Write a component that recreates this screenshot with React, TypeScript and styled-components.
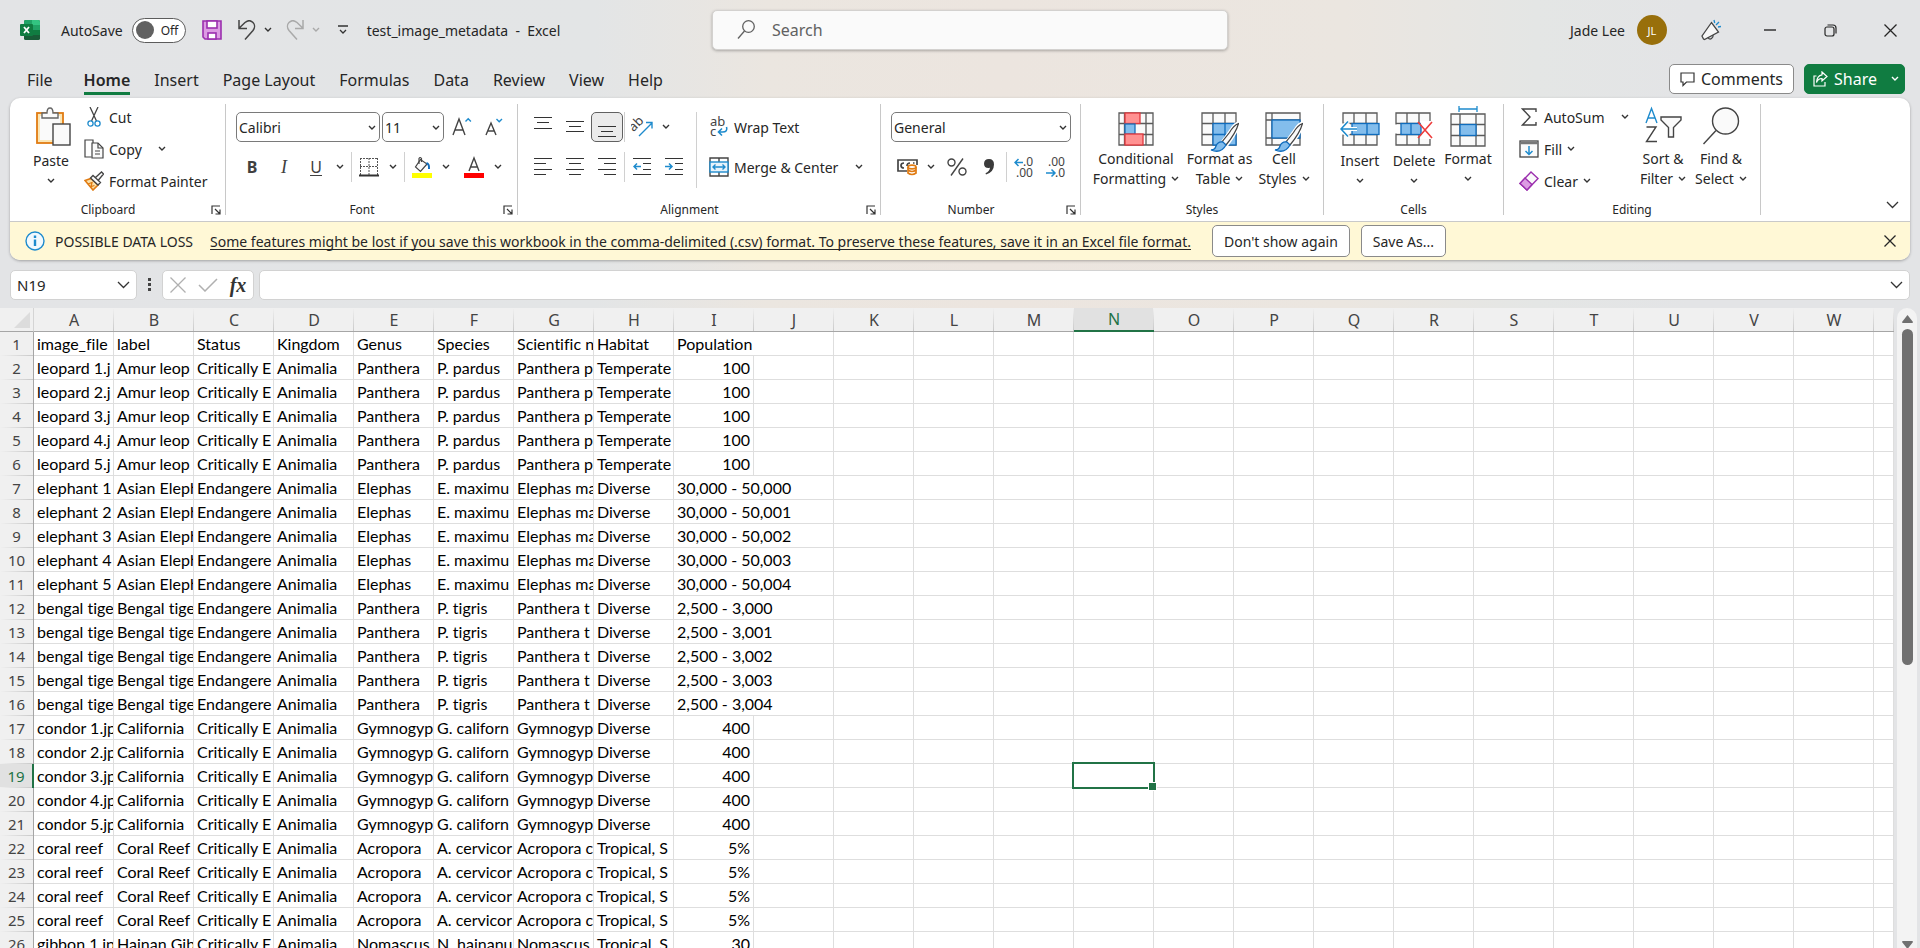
import React from 'react';
import styled, { createGlobalStyle, css } from 'styled-components';

const UI_FONT = '"Noto Sans", "Open Sans", sans-serif';
const CELL_FONT = 'Lato, "Open Sans", sans-serif';
const INK = '#262626';
const LINE = '#444444';
const BLUE = '#1e8bcd';
const GREEN = '#217346';

const GlobalStyle = createGlobalStyle`
  * { box-sizing: border-box; }
  body { margin: 0; font-family: ${UI_FONT}; color: ${INK}; overflow: hidden; }
  button, input, select { font: inherit; color: inherit; }
  svg { display: block; flex: none; }
`;

const Window = styled.div`
  display: flex;
  flex-direction: column;
  height: 100vh;
  background: linear-gradient(90deg, #e3e4e6 0%, #e3e5e6 31%, #ebe6e0 40%, #ece5df 52%, #ebe6e0 70%, #e4e6e5 80%, #e3e4e6 88%);
`;

/* ---------- title bar ---------- */

const TitleBar = styled.header`
  display: grid;
  grid-template-columns: 1fr minmax(0, 516px) 1fr;
  align-items: center;
  height: 60px;
  padding-left: 20px;
  font-size: 14px;
`;

const QuickAccess = styled.div`
  display: flex;
  align-items: center;
  white-space: nowrap;
`;

const PlainButton = styled.button<{ $w?: number; $h?: number; $gap?: number }>`
  display: flex;
  flex: none;
  align-items: center;
  justify-content: center;
  width: ${p => (p.$w ? `${p.$w}px` : 'auto')};
  height: ${p => p.$h ?? 30}px;
  margin-left: ${p => p.$gap ?? 0}px;
  padding: 0;
  border: 0;
  background: transparent;
`;

const SwitchName = styled.label`
  margin: 0 9px 0 21px;
`;

const Switch = styled.span`
  display: flex;
  align-items: center;
  gap: 7px;
  width: 54px;
  height: 25px;
  padding-left: 3px;
  border: 1px solid #5c5c5c;
  border-radius: 13px;
  background: #fff;
  font-size: 12px;
`;

const SwitchKnob = styled.input`
  appearance: none;
  width: 18px;
  height: 18px;
  margin: 0;
  border-radius: 50%;
  background: #616161;
`;

const DocTitle = styled.h1`
  margin: 0 0 0 19px;
  font-size: 14px;
  font-weight: 400;
  white-space: pre;
`;

const SearchBox = styled.label`
  display: flex;
  align-items: center;
  gap: 15px;
  height: 40px;
  padding-left: 24px;
  border: 1px solid #d3d1cf;
  border-radius: 5px;
  background: #fafafa;
  box-shadow: 0 1px 3px rgba(0, 0, 0, 0.28);
`;

const SearchInput = styled.input`
  flex: 1;
  min-width: 0;
  border: 0;
  outline: 0;
  background: transparent;
  font-size: 16px;
  &::placeholder { color: #616161; opacity: 1; }
`;

const WindowTools = styled.div`
  display: flex;
  align-items: center;
  justify-content: flex-end;
`;

const Avatar = styled.span`
  display: flex;
  align-items: center;
  justify-content: center;
  width: 30px;
  height: 30px;
  margin: 0 15px 0 12px;
  border-radius: 50%;
  background: #986f0b;
  color: #fff;
  font-size: 11px;
`;

/* ---------- tabs ---------- */

const TabRow = styled.div`
  display: flex;
  align-items: center;
  height: 38px;
  padding: 0 15px 0 27px;
`;

const Tabs = styled.nav`
  display: flex;
  flex: 1;
  align-self: flex-end;
  gap: 24px;
  padding-bottom: 3px;
`;

const Tab = styled.button<{ $active?: boolean; $first?: boolean }>`
  padding: 0;
  margin-right: ${p => (p.$first ? 7 : 0)}px;
  border: 0;
  border-bottom: 3px solid ${p => (p.$active ? '#107c41' : 'transparent')};
  background: transparent;
  font-size: 16px;
  line-height: 24px;
  font-weight: ${p => (p.$active ? 600 : 400)};
`;

const CommentsButton = styled.button`
  display: flex;
  align-items: center;
  gap: 6px;
  height: 30px;
  padding: 0 10px;
  border: 1px solid #8a8a8a;
  border-radius: 5px;
  background: #fff;
  font-size: 16px;
`;

const ShareButton = styled(CommentsButton)`
  margin-left: 10px;
  padding: 0 5px 0 8px;
  border-color: #107c41;
  background: #107c41;
  color: #fff;
`;

/* ---------- ribbon ---------- */

const Panel = styled.section`
  margin: 0 10px;
  border-radius: 10px;
  background: #fff;
  box-shadow: 0 1px 3px rgba(0, 0, 0, 0.3);
  overflow: hidden;
`;

const Ribbon = styled.div`
  display: flex;
  height: 123px;
  font-size: 14px;
`;

const GroupFrame = styled.div<{ $w: number }>`
  display: flex;
  flex: none;
  flex-direction: column;
  width: ${p => p.$w}px;
`;

const GroupBody = styled.div<{ $left: number; $top: number }>`
  display: flex;
  flex: 1;
  align-items: flex-start;
  padding: ${p => p.$top}px 0 0 ${p => p.$left}px;
`;

const GroupFooter = styled.div<{ $launcher?: boolean }>`
  display: grid;
  grid-template-columns: ${p => (p.$launcher ? '1fr 19px' : '1fr')};
  align-items: center;
  height: 23px;
  font-size: 12px;
  text-align: center;
`;

const Divider = styled.span`
  flex: none;
  width: 1px;
  margin: 6px 0;
  background: #c8c8c8;
`;

const MiniDivider = styled.span<{ $l?: number; $h?: number }>`
  flex: none;
  width: 1px;
  height: ${p => p.$h ?? 30}px;
  margin: 0 1px 0 ${p => p.$l ?? 1}px;
  background: #d0d0d0;
`;

const Rows = styled.div<{ $gap?: number; $w?: number }>`
  display: flex;
  flex: none;
  flex-direction: column;
  gap: ${p => p.$gap ?? 0}px;
  width: ${p => (p.$w ? `${p.$w}px` : 'auto')};
`;

const Row = styled.div`
  display: flex;
  align-items: center;
`;

const LabelButton = styled.button<{ $h?: number }>`
  display: flex;
  align-items: center;
  gap: 5px;
  height: ${p => p.$h ?? 32}px;
  padding: 0 2px;
  border: 0;
  background: transparent;
  white-space: nowrap;
`;

const IconSlot = styled.span`
  display: flex;
  justify-content: center;
  width: 20px;
`;

const LabelGap = styled.span<{ $w: number }>`
  width: ${p => p.$w}px;
`;

const BigButton = styled.button<{ $w: number }>`
  display: flex;
  flex: none;
  flex-direction: column;
  align-items: center;
  width: ${p => p.$w}px;
  padding: 0;
  border: 0;
  background: transparent;
  line-height: 20px;
  white-space: nowrap;
`;

const BigIcon = styled.span<{ $tall?: boolean }>`
  display: flex;
  align-items: flex-start;
  justify-content: center;
  height: ${p => (p.$tall ? 45 : 43)}px;
`;

const BigLine = styled.span`
  display: flex;
  align-items: center;
  gap: 5px;
  height: 20px;
`;

const ToolButton = styled.button<{ $w?: number; $pressed?: boolean }>`
  display: flex;
  flex: none;
  align-items: center;
  justify-content: center;
  width: ${p => p.$w ?? 32}px;
  height: 30px;
  padding: 0;
  border: 1px solid transparent;
  border-radius: 5px;
  background: transparent;
  ${p => p.$pressed && css`
    border-color: #616161;
    background: #ebebeb;
  `}
`;

const LetterStyle = styled.span<{ $kind: 'bold' | 'italic' | 'underline' }>`
  color: #404040;
  font-size: 16px;
  line-height: 18px;
  ${p => p.$kind === 'bold' && 'font-weight: 700;'}
  ${p => p.$kind === 'italic' && 'font-family: "Liberation Serif", serif; font-style: italic; font-size: 18px;'}
  ${p => p.$kind === 'underline' && 'border-bottom: 1px solid #404040; line-height: 16px;'}
`;

const SelectFrame = styled.span<{ $w: number }>`
  position: relative;
  display: block;
  flex: none;
  width: ${p => p.$w}px;
  margin-right: 2px;
`;

const SelectField = styled.select`
  appearance: none;
  width: 100%;
  height: 30px;
  padding: 0 20px 0 2px;
  border: 1px solid #7a7a7a;
  border-radius: 5px;
  background: #fff;
  font-size: 14px;
`;

const SelectArrow = styled.span`
  position: absolute;
  right: 4px;
  top: 13px;
  pointer-events: none;
`;

const Collapse = styled.div`
  display: flex;
  flex: 1;
  align-items: flex-end;
  justify-content: flex-end;
  padding: 0 6px 4px 0;
`;

/* ---------- warning bar ---------- */

const Notice = styled.div`
  display: flex;
  align-items: center;
  height: 39px;
  padding: 0 8px 0 15px;
  border-top: 1px solid #c9c9c9;
  background: #fff8d6;
  font-size: 14px;
  white-space: nowrap;
`;

const NoticeTitle = styled.strong`
  margin: 0 17px 0 10px;
  font-weight: 400;
`;

const NoticeLink = styled.a`
  margin-right: 21px;
  color: inherit;
  text-decoration: underline;
  text-decoration-skip-ink: none;
  text-underline-offset: 2px;
`;

const NoticeButton = styled.button`
  height: 32px;
  margin-right: 11px;
  padding: 0 11px;
  border: 1px solid #8a8a8a;
  border-radius: 5px;
  background: #fff;
`;

const Spacer = styled.span`
  flex: 1;
`;

/* ---------- formula bar ---------- */

const FormulaBar = styled.div`
  display: flex;
  align-items: center;
  height: 48px;
  padding: 2px 10px 0;
`;

const Field = styled.label<{ $w?: number }>`
  display: flex;
  align-items: center;
  flex: ${p => (p.$w ? `0 0 ${p.$w}px` : '1')};
  min-width: 0;
  height: 30px;
  padding: 0 6px;
  border: 1px solid #d2d2d2;
  border-radius: 5px;
  background: #fff;
`;

const FieldInput = styled.input`
  flex: 1;
  width: 100%;
  min-width: 0;
  padding: 0;
  border: 0;
  outline: 0;
  background: transparent;
  font-size: 15px;
`;

const FxBox = styled.div`
  display: flex;
  flex: none;
  width: 92px;
  height: 30px;
  margin-right: 5px;
  border: 1px solid #d2d2d2;
  border-radius: 5px;
  background: #fff;
`;

const Fx = styled.span`
  color: #333;
  font: italic 700 20px "Liberation Serif", serif;
`;

/* ---------- sheet ---------- */

const SheetArea = styled.main`
  display: flex;
  flex: 1;
  min-height: 0;
  padding-right: 3px;
`;

const SheetView = styled.div`
  flex: 1;
  min-width: 0;
  overflow: hidden;
  background: #fff;
`;

const Table = styled.table`
  width: 100%;
  table-layout: fixed;
  border-collapse: separate;
  border-spacing: 0;
  font-family: ${CELL_FONT};
  font-size: 16px;
  font-variant-ligatures: none;
  line-height: 22px;
  color: #000;
`;

const Col = styled.col<{ $w?: number }>`
  width: ${p => (p.$w ? `${p.$w}px` : 'auto')};
`;

const ColHead = styled.th<{ $active?: boolean }>`
  height: 24px;
  padding: 0;
  border-bottom: ${p => (p.$active ? `2px solid ${GREEN}` : '1px solid #a6a6a6')};
  background:
    linear-gradient(180deg, #f0f0f0, #c9c9c9) right / 1px 100% no-repeat,
    ${p => (p.$active ? '#e1e1e1' : '#f0f0f0')};
  color: ${p => (p.$active ? GREEN : '#444')};
  font: 400 16px / 20px ${UI_FONT};
`;

const RowHead = styled.th<{ $active?: boolean }>`
  height: 24px;
  padding: 0;
  border-right: ${p => (p.$active ? `2px solid ${GREEN}` : '1px solid #a6a6a6')};
  background:
    linear-gradient(90deg, #f0f0f0, #c9c9c9) bottom / 100% 1px no-repeat,
    ${p => (p.$active ? '#e1e1e1' : '#f0f0f0')};
  color: ${p => (p.$active ? GREEN : '#444')};
  font: 400 15px / 22px ${UI_FONT};
  text-align: center;
`;

const Corner = styled.th`
  height: 24px;
  padding: 4px 3px 3px 14px;
  border-right: 1px solid #d4d4d4;
  border-bottom: 1px solid #a6a6a6;
  background: #f0f0f0;
`;

const Cell = styled.td<{ $num?: boolean; $active?: boolean }>`
  position: ${p => (p.$active ? 'relative' : 'static')};
  height: 24px;
  padding: 0 3px;
  border-right: 1px solid #dedede;
  border-bottom: 1px solid #dedede;
  overflow: ${p => (p.$active ? 'visible' : 'hidden')};
  text-align: ${p => (p.$num ? 'right' : 'left')};
  white-space: pre;
`;

const Selection = styled.span`
  position: absolute;
  inset: -2px;
  border: 2px solid ${GREEN};
  &::after {
    content: '';
    position: absolute;
    right: -4px;
    bottom: -4px;
    width: 7px;
    height: 7px;
    border: 1px solid #fff;
    background: ${GREEN};
  }
`;

const ScrollTrack = styled.div`
  display: flex;
  flex: none;
  flex-direction: column;
  align-items: center;
  width: 20px;
  margin-left: 3px;
  padding-top: 7px;
  border-radius: 10px 10px 0 0;
  background: #f3f3f3;
`;

const ScrollThumb = styled.div`
  flex: 336;
  width: 11px;
  margin-top: 6px;
  border-radius: 6px;
  background: #707070;
`;

const ScrollRest = styled.div`
  flex: 276;
`;

/* ---------- icons ---------- */

type SvgProps = { w: number; h: number; children: React.ReactNode; stroke?: string; sw?: number; fill?: string };
const Svg = ({ w, h, children, stroke = LINE, sw = 1, fill = 'none' }: SvgProps) => (
  <svg width={w} height={h} viewBox={`0 0 ${w} ${h}`} fill={fill} stroke={stroke} strokeWidth={sw} aria-hidden="true">
    {children}
  </svg>
);

const Chevron = ({ color = '#333', big = false }: { color?: string; big?: boolean }) =>
  big ? (
    <Svg w={13} h={8} stroke={color} sw={1.3}><path d="M1 1l5.5 5.5L12 1" /></Svg>
  ) : (
    <Svg w={8} h={6} stroke={color} sw={1.4}><path d="M1 1l3 3 3-3" /></Svg>
  );

const ExcelLogo = () => (
  <Svg w={20} h={20} stroke="none">
    <rect x="4" y="0" width="16" height="20" rx="1.5" fill="#185c37" />
    <path d="M4 1.5Q4 0 5.500 0H12v5H4z" fill="#21a366" />
    <path d="M12 0h6.500Q20 0 20 1.500V5h-8z" fill="#33c481" />
    <rect x="4" y="5" width="8" height="5" fill="#107c41" />
    <rect x="12" y="5" width="8" height="5" fill="#21a366" />
    <rect x="12" y="10" width="8" height="5" fill="#107c41" />
    <rect x="0" y="4" width="13" height="12" rx="1" fill="#107c41" />
    <path d="M4 7l5 6M9 7l-5 6" stroke="#fff" strokeWidth="1.800" />
  </Svg>
);

const SaveIcon = () => (
  <Svg w={20} h={20} stroke="#9b2fae" sw={1.6} fill="#dc9be3">
    <path d="M1 1h18v18H3l-2-2z" />
    <rect x="5" y="1" width="10" height="7" fill="#fff" />
    <rect x="6" y="13" width="8" height="6" fill="#fff" />
  </Svg>
);

const UndoIcon = ({ flip = false, color = LINE }: { flip?: boolean; color?: string }) => (
  <Svg w={18} h={20} stroke={color} sw={1.5}>
    <g transform={flip ? 'translate(18 0) scale(-1 1)' : undefined}>
      <path d="M1 0v8.500h8M1.300 8L7 2.500c3-2.500 6-2 8 0s2 5.500 0 8L7 19.500" />
    </g>
  </Svg>
);

const CustomizeIcon = () => (
  <Svg w={10} h={10} stroke="#333" sw={1.3}><path d="M0 1h10M2 5l3 3 3-3" /></Svg>
);

const SearchIcon = () => (
  <Svg w={18} h={20} stroke="#616161" sw={1.3}><circle cx="11.500" cy="6.500" r="5.800" /><path d="M7.500 11L1 18.500" /></Svg>
);

const PenIcon = () => (
  <Svg w={20} h={22} sw={1.3}>
    <path d="M10.500 3.500L1 17l1.500 3 1 .5L17.500 13z" fill="#f7f7f7" />
    <path d="M7 18.500q1.500 2.500 3.500 1t1.500-3.500" />
    <path d="M13 1l.7 3M18 3l-3 3M20 7.500l-3 .5" stroke={BLUE} />
  </Svg>
);

const CommentIcon = () => (
  <Svg w={15} h={15} stroke="#333" sw={1.2}><path d="M1 1h13v9H6.500L3 13.500V10H1z" /></Svg>
);
const ShareIcon = () => (
  <Svg w={15} h={16} stroke="#fff" sw={1.2}>
    <path d="M3.500 5H1v10h11v-4M9 1l5 4.500L9 10V7.500q-4 0-5.500 4Q4 4.500 9 3.800z" />
  </Svg>
);

const PasteIcon = () => (
  <Svg w={42} h={41} sw={1.4}>
    <rect x="7" y="7" width="26" height="30" fill="#fbe6b5" stroke="#e07b12" strokeWidth="1.800" />
    <rect x="10" y="10" width="20" height="24" fill="#fafafa" stroke="none" />
    <path d="M12 12V7h5q0-5 3-5t3 5h5v5z" fill="#fafafa" stroke="#666" />
    <rect x="23" y="18" width="17" height="21" fill="#fafafa" />
  </Svg>
);
const CutIcon = () => (
  <Svg w={14} h={20} sw={1.3}>
    <path d="M3 0l6.500 14M11 0L4.500 14" />
    <circle cx="3.500" cy="16.500" r="2.600" stroke={BLUE} /><circle cx="10.500" cy="16.500" r="2.600" stroke={BLUE} />
  </Svg>
);
const CopyIcon = () => (
  <Svg w={20} h={20} sw={1.2}>
    <path d="M7.500 18H1V1h8v3" /><path d="M8 4h6l5 5v10H8z" fill="#fafafa" /><path d="M14 4v5h5M11 12h5M11 15h5" />
  </Svg>
);
const PainterIcon = () => (
  <Svg w={20} h={20} sw={1.3}>
    <path d="M1 9.500l6-2 7 6.500-5 5z" fill="#fbe0a8" stroke="#e07b12" strokeWidth="1.600" />
    <path d="M4 13l4-1.500-1 4 3.500-1" stroke="#e07b12" />
    <path d="M6.500 7l2.500-2.500 7.500 7L14 14zM11.500 6.500l6-5.500 2 2-5 6" fill="#fafafa" />
  </Svg>
);

const LauncherIcon = () => (
  <Svg w={10} h={10} stroke="#333" sw={1.2}><path d="M1 9V1h8M4 4l5 5M9 4.500V9H4.500" /></Svg>
);

const SizeIcon = ({ up }: { up: boolean }) => (
  <Svg w={20} h={20} sw={1.4}>
    <path d={up ? 'M1 18L7 2l6 16M3 13h8' : 'M2 18L7 6l5 12M4 14h6'} />
    <path d={up ? 'M13.500 4.500l2.700-2.700 2.700 2.700' : 'M12.500 2l2.700 2.700L18 2'} stroke={BLUE} />
  </Svg>
);

const BordersIcon = () => (
  <Svg w={20} h={20} stroke="#555">
    <path d="M1 1.500h18M1.500 1v17M10 1v17M18.500 1v17M1 9.500h18" strokeDasharray="2 1" />
    <path d="M0 18.500h20" strokeWidth="1.800" stroke="#333" />
  </Svg>
);
const FillColorIcon = () => (
  <Svg w={20} h={22} sw={1.2}>
    <path d="M8.500 3.500L3.500 11l5 4.500L15 8z" fill="#fafafa" /><path d="M7 8V2.500Q8 .5 9.500 2.500V6" />
    <path d="M14.500 7q3 1 2.500 6" stroke="#0f6cbd" strokeWidth="2" />
    <rect x="0" y="17" width="20" height="5" fill="#ffff00" stroke="none" />
  </Svg>
);
const FontColorIcon = () => (
  <Svg w={20} h={22} sw={1.4}>
    <path d="M5 15L10 2l5 13M6.500 11h7" /><rect x="0" y="17" width="20" height="5" fill="#ff0000" stroke="none" />
  </Svg>
);

const LinesIcon = ({ rows }: { rows: [number, number, number][] }) => (
  <Svg w={18} h={20} stroke="#333" sw={1.2}>
    {rows.map(([y, a, b]) => <path key={y} d={`M${a} ${y + 0.5}H${b}`} />)}
  </Svg>
);
const IndentIcon = ({ out }: { out: boolean }) => (
  <Svg w={18} h={20} stroke="#333" sw={1.2}>
    <path d="M0 1.500h18M10 6.500h8M10 12.500h8M0 17.500h18" />
    <path d={out ? 'M8 9.500H1M4 6.500l-3 3 3 3' : 'M0 9.500h7M4 6.500l3 3-3 3'} stroke={BLUE} strokeWidth="1.500" />
  </Svg>
);
const OrientIcon = () => (
  <Svg w={22} h={22} sw={1.4}>
    <text x="0" y="14" transform="rotate(-45 4 12)" fontSize="13" fontFamily={UI_FONT} fill={LINE} stroke="none">ab</text>
    <path d="M8 20L21 7M15 6.500h6v6" stroke={BLUE} />
  </Svg>
);
const WrapIcon = () => (
  <Svg w={20} h={22} sw={1.4}>
    <text x="1" y="10" fontSize="13" fontFamily={UI_FONT} fill={LINE} stroke="none">ab</text>
    <text x="1" y="20" fontSize="13" fontFamily={UI_FONT} fill={LINE} stroke="none">c</text>
    <path d="M17.500 11q1.500 5-4 5H10M13 12.500L9.500 16l3.500 3.500" stroke={BLUE} strokeWidth="1.600" />
  </Svg>
);
const MergeIcon = () => (
  <Svg w={20} h={20} sw={1.4}>
    <path d="M1 1h18v18H1zM10 1v4M10 15v4" />
    <rect x="1" y="5" width="18" height="10" fill="#e8f3fb" stroke={BLUE} />
    <path d="M4 10h12M6.500 7.500L4 10l2.500 2.500M13.500 7.500L16 10l-2.500 2.500" stroke={BLUE} />
  </Svg>
);

const CurrencyIcon = () => (
  <Svg w={21} h={18} sw={1.7}>
    <path d="M10 13H1V2h19v5M7 5Q4 5 4 7.500T7 10M13 5q-3 0-3 3M16 5h1.500" />
    <path d="M11 9v6q4 3 8 0V9" fill="#fff" stroke="#e07b12" />
    <ellipse cx="15" cy="9" rx="4" ry="1.800" fill="#fff" stroke="#e07b12" /><path d="M11 12q4 3 8 0" stroke="#e07b12" />
  </Svg>
);
const PercentIcon = () => (
  <Svg w={20} h={20} sw={1.4}><circle cx="4.500" cy="5.500" r="3.500" /><circle cx="15.500" cy="14.500" r="3.500" /><path d="M16 1.500L4 18.500" /></Svg>
);
const CommaIcon = () => (
  <Svg w={10} h={16} stroke="none" fill="#3b3b3b"><path d="M5 0q5 0 5 5.500Q10 13 2 15.500l-.5-1.200Q5.500 12.500 6 8.800 0 9.500 0 4.700 0 0 5 0z" /></Svg>
);
const DecimalIcon = ({ more }: { more: boolean }) => (
  <Svg w={20} h={22} sw={1.5}>
    <text x={more ? 9 : 2} y="10" fontSize="12" fontFamily={UI_FONT} fill={LINE} stroke="none">{more ? '.0' : '.00'}</text>
    <text x={more ? 2 : 9} y="21" fontSize="12" fontFamily={UI_FONT} fill={LINE} stroke="none">{more ? '.00' : '.0'}</text>
    <path d={more ? 'M9 6.500H1M4.500 3L1 6.500 4.500 10' : 'M0 17h8.500M5.500 13.500L9 17l-3.500 3.500'} stroke={BLUE} />
  </Svg>
);

const gridPath = 'M1 1h34v32H1zM1 11.500h34M1 22.500h34M12 1v32M24 1v32';
const CondIcon = () => (
  <Svg w={36} h={34} sw={1.3} stroke="#5a5a5a">
    <path d="M1 1h34v32H1zM1 11.500h34M1 22.500h34M6.500 1v32M28 1v32" fill="#fafafa" />
    <rect x="7" y="1" width="15" height="10.500" fill="#ff9191" stroke="#e0383e" />
    <rect x="7" y="12" width="10" height="10" fill="#83bdec" stroke="#1b6fb8" />
    <rect x="7" y="22" width="18" height="11" fill="#ff9191" stroke="#e0383e" />
  </Svg>
);
const Brush = () => (
  <g>
    <path d="M38 11q-4 0-8 7l-8 11 4 4Q36 20 38 11z" fill="#fff" stroke="#fff" strokeWidth="3" />
    <path d="M37.500 11.500q-5 2-9 9L21 30l4 3Q35 21 37.500 11.500z" fill="#fafafa" stroke={LINE} strokeWidth="1.200" />
    <path d="M22 30q-5-1-7 4-1 4-5 4 10 4 15-5z" fill="#83bdec" stroke="#0f6cbd" />
  </g>
);
const FormatTableIcon = () => (
  <Svg w={38} h={42} sw={1.3} stroke="#5a5a5a">
    <path d={gridPath} fill="#fafafa" /><rect x="12" y="11.500" width="23" height="21.500" fill="#83bdec" stroke="#0f6cbd" />
    <path d="M12 22.500h23M24 11.500V33" stroke="#0f6cbd" /><Brush />
  </Svg>
);
const CellStylesIcon = () => (
  <Svg w={38} h={42} sw={1.3} stroke="#5a5a5a">
    <path d="M1 1h34v32H1zM1 8h34M1 26h34M7 1v32" fill="#fafafa" /><rect x="7" y="8" width="28" height="18" fill="#83bdec" stroke="#0f6cbd" />
    <Brush />
  </Svg>
);
const InsertIcon = () => (
  <Svg w={40} h={34} sw={1.3} stroke="#5a5a5a">
    <path d="M3 1h34v32H3zM3 11.500h34M3 22.500h34M14 1v32M26 1v32" fill="#fafafa" />
    <path d="M0 11.500h10v11H0z" fill="#fff" stroke="none" />
    <rect x="12" y="11.500" width="27" height="11" fill="#83bdec" stroke="#0f6cbd" /><path d="M27 11.500v11" stroke="#0f6cbd" />
    <path d="M17 17H1M8 9.500L1 17l7 7.500" stroke="#fff" strokeWidth="4" /><path d="M17 17H1M8 9.500L1 17l7 7.500" stroke={BLUE} strokeWidth="1.600" />
  </Svg>
);
const DeleteIcon = () => (
  <Svg w={38} h={34} sw={1.3} stroke="#5a5a5a">
    <path d="M1 1h34v32H1zM1 11.500h34M1 22.500h34M12 1v32M24 1v32" fill="#fafafa" />
    <path d="M0 12.500h5v9H0z" fill="#fff" stroke="none" />
    <rect x="6" y="11.500" width="20" height="11" fill="#83bdec" stroke="#0f6cbd" /><path d="M16 11.500v11" stroke="#0f6cbd" />
    <path d="M25 9h12v18H25l3-9z" fill="#fff" stroke="none" />
    <path d="M23 10l14 16M37 10L23 26" stroke="#ee3d3d" strokeWidth="1.600" />
  </Svg>
);
const FormatIcon = () => (
  <Svg w={36} h={42} sw={1.3} stroke="#5a5a5a">
    <path d="M9 3h18M9 0v6M27 0v6" stroke={BLUE} />
    <path d="M1 8h34v32H1zM1 18.500h34M1 29.500h34M10 8v32M26 8v32" fill="#fafafa" />
    <rect x="10" y="18.500" width="16" height="11" fill="#83bdec" stroke="#0f6cbd" />
  </Svg>
);

const SumIcon = () => (
  <Svg w={16} h={18} sw={1.4}><path d="M15 4V1H1.500L9 9l-7.500 8H15v-3" /></Svg>
);
const FillIcon = () => (
  <Svg w={20} h={18} sw={1.3}>
    <rect x="1" y="1" width="18" height="16" fill="#fafafa" /><path d="M1 3h18" strokeWidth="2.500" stroke="#777" />
    <path d="M10 6v8.500M6.500 11l3.500 3.500 3.500-3.500" stroke={BLUE} strokeWidth="1.500" />
  </Svg>
);
const ClearIcon = () => (
  <Svg w={20} h={20} stroke="#9b2fae" sw={1.4}>
    <path d="M12 1l7 6.500L8 19l-7-6.500z" fill="#fafafa" /><path d="M6 7l7 6.500L8 19l-7-6.500z" fill="#dc9be3" />
  </Svg>
);
const SortIcon = () => (
  <Svg w={37} h={37} sw={1.4}>
    <path d="M1 17L6.500 2.500 12 17M3 12h7" stroke={BLUE} /><path d="M1.500 21H11L1.500 35.500H12" />
    <path d="M16 11h20v3l-7.500 7.500V31h-5v-9.500L16 14z" fill="#fafafa" />
  </Svg>
);
const FindIcon = () => (
  <Svg w={38} h={39} sw={1.4}><circle cx="23.500" cy="15" r="13" fill="#fafafa" /><path d="M14 24.500L1.500 38" /></Svg>
);

const InfoIcon = () => (
  <Svg w={20} h={20} stroke={BLUE} sw={1.4} fill="#f2f9fe">
    <circle cx="10" cy="10" r="9" /><path d="M10 8.500V15M10 4.500V7" strokeWidth="2.400" />
  </Svg>
);
const CrossIcon = ({ size = 12, color = '#262626' }: { size?: number; color?: string }) => (
  <Svg w={size} h={size} stroke={color} sw={1.3}><path d={`M.5.5l${size - 1} ${size - 1}M${size - 0.5}.5L.5 ${size - 0.5}`} /></Svg>
);

/* ---------- ribbon pieces ---------- */

type GroupProps = { name: string; w: number; left: number; top: number; launcher?: boolean; children: React.ReactNode };
const Group = ({ name, w, left, top, launcher, children }: GroupProps) => (
  <>
    <GroupFrame $w={w}>
      <GroupBody $left={left} $top={top}>{children}</GroupBody>
      <GroupFooter $launcher={launcher}>
        <span>{name}</span>
        {launcher && <PlainButton $h={20} aria-label={`${name} settings`}><LauncherIcon /></PlainButton>}
      </GroupFooter>
    </GroupFrame>
    <Divider />
  </>
);

const Drop = ({ label }: { label: string }) => (
  <ToolButton $w={16} aria-label={label}><Chevron /></ToolButton>
);

const Picker = ({ label, value, w }: { label: string; value: string; w: number }) => (
  <SelectFrame $w={w}>
    <SelectField aria-label={label} defaultValue={value}><option>{value}</option></SelectField>
    <SelectArrow><Chevron /></SelectArrow>
  </SelectFrame>
);

type BigProps = { w: number; icon: React.ReactNode; lines: string[]; tall?: boolean };
const Big = ({ w, icon, lines, tall }: BigProps) => (
  <BigButton $w={w}>
    <BigIcon $tall={tall}>{icon}</BigIcon>
    <BigLine>{lines[0]}</BigLine>
    <BigLine>{lines[1]}<Chevron /></BigLine>
  </BigButton>
);

const DownPad = styled.span<{ $y: number }>`
  padding-top: ${p => p.$y}px;
`;

/* ---------- sheet data ---------- */

const species = [
  { n: 5, file: (i: number) => `leopard ${i}.j`, rest: ['Amur leop', 'Critically E', 'Animalia', 'Panthera', 'P. pardus', 'Panthera p', 'Temperate'], pop: () => '100' },
  { n: 5, file: (i: number) => `elephant ${i}`, rest: ['Asian Eleph', 'Endangere', 'Animalia', 'Elephas', 'E. maximu', 'Elephas ma', 'Diverse'], pop: (i: number) => `30,000 - 50,00${i - 1}` },
  { n: 5, file: () => 'bengal tige', rest: ['Bengal tige', 'Endangere', 'Animalia', 'Panthera', 'P. tigris', 'Panthera t', 'Diverse'], pop: (i: number) => `2,500 - 3,00${i - 1}` },
  { n: 5, file: (i: number) => `condor ${i}.jp`, rest: ['California', 'Critically E', 'Animalia', 'Gymnogyp', 'G. californ', 'Gymnogyp', 'Diverse'], pop: () => '400' },
  { n: 4, file: () => 'coral reef', rest: ['Coral Reef', 'Critically E', 'Animalia', 'Acropora', 'A. cervicor', 'Acropora c', 'Tropical, S'], pop: () => '5%' },
  { n: 1, file: (i: number) => `gibbon ${i}.jp`, rest: ['Hainan Gib', 'Critically E', 'Animalia', 'Nomascus', 'N. hainanu', 'Nomascus', 'Tropical, S'], pop: () => '30' },
];

const rows: string[][] = [
  ['image_file', 'label', 'Status', 'Kingdom', 'Genus', 'Species', 'Scientific n', 'Habitat', 'Population'],
  ...species.flatMap(s => Array.from({ length: s.n }, (_, k) => [s.file(k + 1), ...s.rest, s.pop(k + 1)])),
];

const columns = 'ABCDEFGHIJKLMNOPQRSTUVW'.split('');
const ACTIVE_COL = columns.indexOf('N');
const ACTIVE_ROW = 19;
const isNumber = (t: string) => /^\d+%?$/.test(t);

const SheetRow = ({ index, values }: { index: number; values: string[] }) => {
  const spills = !isNumber(values[8]);
  const firstEmpty = spills ? 10 : 9;
  return (
    <tr>
      <RowHead scope="row" $active={index === ACTIVE_ROW}>{index}</RowHead>
      {values.map((v, c) => (
        <Cell key={c} $num={isNumber(v)} colSpan={c === 8 && spills ? 2 : 1}>{v}</Cell>
      ))}
      {columns.slice(firstEmpty).map((name, k) => {
        const active = index === ACTIVE_ROW && firstEmpty + k === ACTIVE_COL;
        return <Cell key={name} $active={active}>{active && <Selection />}</Cell>;
      })}
      <Cell />
    </tr>
  );
};

const tabs = ['File', 'Home', 'Insert', 'Page Layout', 'Formulas', 'Data', 'Review', 'View', 'Help'];

export default function App() {
  return (
    <Window>
      <GlobalStyle />
      <TitleBar>
        <QuickAccess>
          <ExcelLogo />
          <SwitchName htmlFor="autosave">AutoSave</SwitchName>
          <Switch><SwitchKnob id="autosave" type="checkbox" role="switch" />Off</Switch>
          <PlainButton $gap={16} aria-label="Save"><SaveIcon /></PlainButton>
          <PlainButton $gap={16} aria-label="Undo"><UndoIcon /></PlainButton>
          <PlainButton $gap={8} aria-label="Undo history"><Chevron /></PlainButton>
          <PlainButton $gap={14} aria-label="Redo"><UndoIcon flip color="#a9a9a9" /></PlainButton>
          <PlainButton $gap={8} aria-label="Redo history"><Chevron color="#a9a9a9" /></PlainButton>
          <PlainButton $gap={18} aria-label="Customize toolbar"><CustomizeIcon /></PlainButton>
          <DocTitle>{'test_image_metadata  -  Excel'}</DocTitle>
        </QuickAccess>
        <SearchBox>
          <SearchIcon />
          <SearchInput type="search" placeholder="Search" aria-label="Search" />
        </SearchBox>
        <WindowTools>
          <span>Jade Lee</span>
          <Avatar>JL</Avatar>
          <PlainButton $w={58} aria-label="Draw"><PenIcon /></PlainButton>
          <PlainButton $w={60} aria-label="Minimize"><Svg w={12} h={2} stroke={INK} sw={1.4}><path d="M0 1h12" /></Svg></PlainButton>
          <PlainButton $w={60} aria-label="Restore">
            <Svg w={13} h={13} stroke={INK} sw={1.2}>
              <rect x="1" y="3" width="9" height="9" rx="2" /><path d="M3.500 1H9q3 0 3 3v5.500" />
            </Svg>
          </PlainButton>
          <PlainButton $w={60} aria-label="Close"><CrossIcon size={13} /></PlainButton>
        </WindowTools>
      </TitleBar>

      <TabRow>
        <Tabs>
          {tabs.map(t => <Tab key={t} $active={t === 'Home'} $first={t === 'File'}>{t}</Tab>)}
        </Tabs>
        <CommentsButton><CommentIcon />Comments</CommentsButton>
        <ShareButton><ShareIcon />Share<LabelGap $w={2} /><Chevron color="#fff" /></ShareButton>
      </TabRow>

      <Panel>
        <Ribbon>
          <Group name="Clipboard" w={215} left={13} top={3} launcher>
            <DownPad $y={5}><Big w={56} tall icon={<PasteIcon />} lines={['Paste', '']} /></DownPad>
            <LabelGap $w={3} />
            <Rows>
              <LabelButton><IconSlot><CutIcon /></IconSlot>Cut</LabelButton>
              <LabelButton><IconSlot><CopyIcon /></IconSlot>Copy<LabelGap $w={6} /><Chevron /></LabelButton>
              <LabelButton><IconSlot><PainterIcon /></IconSlot>Format Painter</LabelButton>
            </Rows>
          </Group>

          <Group name="Font" w={291} left={10} top={14} launcher>
            <Rows $gap={10}>
              <Row>
                <Picker label="Font" value="Calibri" w={144} />
                <Picker label="Font size" value="11" w={62} />
                <ToolButton aria-label="Increase font size"><SizeIcon up /></ToolButton>
                <ToolButton aria-label="Decrease font size"><SizeIcon up={false} /></ToolButton>
              </Row>
              <Row>
                <ToolButton><LetterStyle $kind="bold">B</LetterStyle></ToolButton>
                <ToolButton><LetterStyle $kind="italic">I</LetterStyle></ToolButton>
                <ToolButton><LetterStyle $kind="underline">U</LetterStyle></ToolButton>
                <Drop label="Underline styles" />
                <MiniDivider $l={3} />
                <ToolButton aria-label="Borders"><BordersIcon /></ToolButton>
                <Drop label="Border styles" />
                <MiniDivider $l={3} />
                <ToolButton aria-label="Fill colour"><FillColorIcon /></ToolButton>
                <Drop label="Fill colours" />
                <LabelGap $w={4} />
                <ToolButton aria-label="Font colour"><FontColorIcon /></ToolButton>
                <Drop label="Font colours" />
              </Row>
            </Rows>
          </Group>

          <Group name="Alignment" w={362} left={9} top={14} launcher>
            <Rows $gap={10} $w={168}>
              <Row>
                <ToolButton aria-label="Top align"><LinesIcon rows={[[0, 0, 18], [5, 3, 15], [11, 0, 18]]} /></ToolButton>
                <ToolButton aria-label="Middle align"><LinesIcon rows={[[4, 0, 18], [9, 3, 15], [14, 0, 18]]} /></ToolButton>
                <ToolButton $pressed aria-label="Bottom align"><LinesIcon rows={[[9, 0, 18], [14, 3, 15], [19, 0, 18]]} /></ToolButton>
                <MiniDivider />
                <ToolButton aria-label="Orientation"><OrientIcon /></ToolButton>
                <Drop label="Orientations" />
              </Row>
              <Row>
                <ToolButton aria-label="Align left"><LinesIcon rows={[[1, 0, 18], [6, 0, 12], [12, 0, 18], [17, 0, 12]]} /></ToolButton>
                <ToolButton aria-label="Center"><LinesIcon rows={[[1, 0, 18], [6, 3, 15], [12, 0, 18], [17, 3, 15]]} /></ToolButton>
                <ToolButton aria-label="Align right"><LinesIcon rows={[[1, 0, 18], [6, 6, 18], [12, 0, 18], [17, 6, 18]]} /></ToolButton>
                <MiniDivider />
                <ToolButton aria-label="Decrease indent"><IndentIcon out /></ToolButton>
                <ToolButton aria-label="Increase indent"><IndentIcon out={false} /></ToolButton>
              </Row>
            </Rows>
            <MiniDivider $h={76} />
            <LabelGap $w={9} />
            <Rows $gap={10}>
              <LabelButton $h={30}><IconSlot><WrapIcon /></IconSlot>Wrap Text</LabelButton>
              <LabelButton $h={30}><IconSlot><MergeIcon /></IconSlot>Merge &amp; Center<LabelGap $w={7} /><Chevron /></LabelButton>
            </Rows>
          </Group>

          <Group name="Number" w={199} left={10} top={14} launcher>
            <Rows $gap={10}>
              <Picker label="Number format" value="General" w={180} />
              <Row>
                <ToolButton aria-label="Accounting format"><CurrencyIcon /></ToolButton>
                <Drop label="Currencies" />
                <LabelGap $w={2} />
                <ToolButton aria-label="Percent style"><PercentIcon /></ToolButton>
                <ToolButton aria-label="Comma style"><CommaIcon /></ToolButton>
                <MiniDivider />
                <ToolButton aria-label="Increase decimal"><DecimalIcon more /></ToolButton>
                <ToolButton aria-label="Decrease decimal"><DecimalIcon more={false} /></ToolButton>
              </Row>
            </Rows>
          </Group>

          <Group name="Styles" w={242} left={12} top={8}>
            <Big w={86} icon={<DownPad $y={6}><CondIcon /></DownPad>} lines={['Conditional', 'Formatting']} />
            <LabelGap $w={4} />
            <Big w={73} icon={<DownPad $y={6}><FormatTableIcon /></DownPad>} lines={['Format as', 'Table']} />
            <Big w={56} icon={<DownPad $y={6}><CellStylesIcon /></DownPad>} lines={['Cell', 'Styles']} />
          </Group>

          <Group name="Cells" w={179} left={9} top={8}>
            <Big w={54} tall icon={<DownPad $y={6}><InsertIcon /></DownPad>} lines={['Insert', '']} />
            <Big w={54} tall icon={<DownPad $y={6}><DeleteIcon /></DownPad>} lines={['Delete', '']} />
            <Big w={54} icon={<FormatIcon />} lines={['Format', '']} />
          </Group>

          <Group name="Editing" w={256} left={13} top={3}>
            <Rows $w={117}>
              <LabelButton><IconSlot><SumIcon /></IconSlot>AutoSum<LabelGap $w={6} /><Chevron /></LabelButton>
              <LabelButton><IconSlot><FillIcon /></IconSlot>Fill<Chevron /></LabelButton>
              <LabelButton><IconSlot><ClearIcon /></IconSlot>Clear<Chevron /></LabelButton>
            </Rows>
            <DownPad $y={5}><Big w={58} icon={<SortIcon />} lines={['Sort &', 'Filter']} /></DownPad>
            <DownPad $y={5}><Big w={58} icon={<FindIcon />} lines={['Find &', 'Select']} /></DownPad>
          </Group>

          <Collapse><PlainButton $w={24} $h={24} aria-label="Collapse ribbon"><Chevron big /></PlainButton></Collapse>
        </Ribbon>

        <Notice>
          <InfoIcon />
          <NoticeTitle>POSSIBLE DATA LOSS</NoticeTitle>
          <NoticeLink href="#formats">
            Some features might be lost if you save this workbook in the comma-delimited (.csv) format. To preserve these features, save it in an Excel file format.
          </NoticeLink>
          <NoticeButton>Don't show again</NoticeButton>
          <NoticeButton>Save As...</NoticeButton>
          <Spacer />
          <PlainButton $w={24} aria-label="Dismiss"><CrossIcon /></PlainButton>
        </Notice>
      </Panel>

      <FormulaBar>
        <Field $w={127}>
          <FieldInput defaultValue="N19" aria-label="Name box" />
          <Chevron big />
        </Field>
        <PlainButton $w={25} aria-label="Resize name box">
          <Svg w={4} h={14} stroke="none" fill="#444"><path d="M0 0h3v3H0zM0 5h3v3H0zM0 10h3v3H0z" /></Svg>
        </PlainButton>
        <FxBox>
          <PlainButton $w={30} $h={28} aria-label="Cancel"><CrossIcon size={16} color="#b0b0b0" /></PlainButton>
          <PlainButton $w={30} $h={28} aria-label="Enter"><Svg w={20} h={14} stroke="#b0b0b0" sw={1.5}><path d="M1 7l6 6L19 1" /></Svg></PlainButton>
          <PlainButton $w={30} $h={28} aria-label="Insert function"><Fx>fx</Fx></PlainButton>
        </FxBox>
        <Field>
          <FieldInput defaultValue="" aria-label="Formula" />
          <Chevron big />
        </Field>
      </FormulaBar>

      <SheetArea>
        <SheetView>
          <Table>
            <colgroup>
              <Col $w={34} />
              {columns.map(c => <Col key={c} $w={80} />)}
              <Col />
            </colgroup>
            <thead>
              <tr>
                <Corner><Svg w={16} h={16} stroke="none" fill="#dcdcdc"><path d="M16 0v16H0z" /></Svg></Corner>
                {columns.map((c, i) => <ColHead key={c} scope="col" $active={i === ACTIVE_COL}>{c}</ColHead>)}
                <ColHead />
              </tr>
            </thead>
            <tbody>
              {rows.map((r, i) => <SheetRow key={i} index={i + 1} values={r} />)}
            </tbody>
          </Table>
        </SheetView>
        <ScrollTrack>
          <Svg w={11} h={8} stroke="none" fill="#707070"><path d="M5.500 0L11 7q0 1-1 1H1Q0 8 0 7z" /></Svg>
          <ScrollThumb />
          <ScrollRest />
          <Svg w={11} h={7} stroke="none" fill="#707070"><path d="M0 1Q0 0 1 0h9q1 0 1 1L5.500 8z" /></Svg>
        </ScrollTrack>
      </SheetArea>
    </Window>
  );
}
